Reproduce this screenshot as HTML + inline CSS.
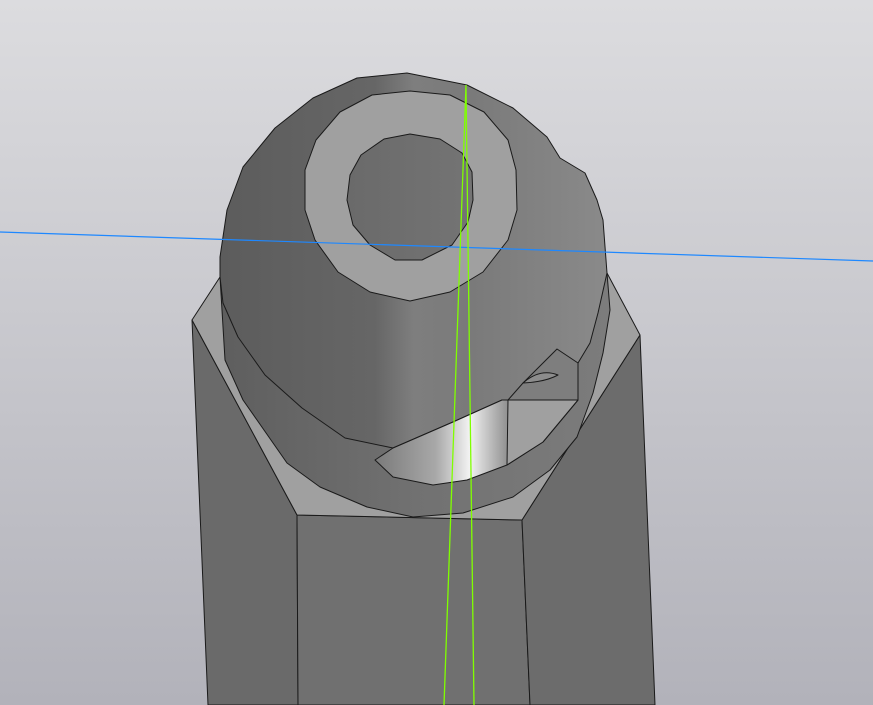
<!DOCTYPE html>
<html><head><meta charset="utf-8"><style>html,body{margin:0;padding:0;width:873px;height:705px;overflow:hidden}svg{display:block}</style></head><body>
<svg width="873" height="705" viewBox="0 0 873 705" xmlns="http://www.w3.org/2000/svg">
<defs>
<linearGradient id="bg" x1="0" y1="0" x2="0" y2="1"><stop offset="0" stop-color="#dcdcdf"/><stop offset="1" stop-color="#b2b2ba"/></linearGradient>
<linearGradient id="dome" x1="0" y1="0" x2="1" y2="0"><stop offset="0" stop-color="#5c5c5c"/><stop offset="0.4" stop-color="#666"/><stop offset="0.5" stop-color="#7e7e7e"/><stop offset="0.65" stop-color="#7a7a7a"/><stop offset="1" stop-color="#8a8a8a"/></linearGradient>
<linearGradient id="skirt" x1="0" y1="0" x2="1" y2="0"><stop offset="0" stop-color="#5e5e5e"/><stop offset="0.5" stop-color="#717171"/><stop offset="1" stop-color="#7c7c7c"/></linearGradient>
<linearGradient id="hole" x1="0" y1="0" x2="1" y2="0"><stop offset="0" stop-color="#6a6a6a"/><stop offset="1" stop-color="#747474"/></linearGradient>
<linearGradient id="slot" x1="375" y1="0" x2="510" y2="0" gradientUnits="userSpaceOnUse"><stop offset="0" stop-color="#7a7a7a"/><stop offset="0.45" stop-color="#a8a8a8"/><stop offset="0.7" stop-color="#f2f2f2"/><stop offset="1" stop-color="#8a8a8a"/></linearGradient>
</defs>
<rect width="873" height="705" fill="url(#bg)"/>
<g stroke="#1a1a1a" stroke-width="1" stroke-linejoin="round">
<polygon points="192,320 297,515 298,705 208,705" fill="#6a6a6a"/>
<polygon points="297,515 522,520 530,705 298,705" fill="#707070"/>
<polygon points="522,520 640,335 655,705 530,705" fill="#6c6c6c"/>
<polygon points="192,320 220,277 607,273 640,335 522,520 297,515" fill="#a0a0a0"/>
<polygon points="220,277 225,360 243,400 257,420 287,463 320,487 367,507 413,517 463,513 513,497 550,470 577,437 593,393 603,353 610,310 607,273" fill="url(#skirt)"/>
<polygon points="220,257 227,210 243,167 275,128 313,98 357,78 407,73 467,85 513,108 547,137 560,158 585,173 597,200 603,220 607,273 598,313 590,343 578,363 578,400 502,400 453,422 393,448 345,438 302,408 265,375 238,337 223,303 220,277" fill="url(#dome)"/>
<polygon points="375,460 393,448 453,422 502,400 578,400 543,442 507,465 467,480 433,485 393,477" fill="url(#slot)"/>
<polygon points="508,400 578,400 543,442 507,465" fill="#a0a0a0"/>
<polygon points="557,349 578,363 578,400 508,400 523,383" fill="#7e7e7e"/>
<path d="M523,383 Q540,368 558,375 Q545,382 523,383 Z" fill="#8c8c8c"/>
<polygon points="410,91 450,95 484,112 508,140 516,170 517,210 508,240 483,272 450,292 410,301 370,292 338,272 315,240 305,210 305,170 316,140 340,112 372,95" fill="#a0a0a0"/>
<polygon points="410,134 440,139 462,153 472,172 473,200 468,222 452,245 422,260 395,260 370,245 353,225 347,200 350,175 361,155 384,139" fill="url(#hole)"/>
</g>
<line x1="0" y1="232" x2="873" y2="261" stroke="#1e88ff" stroke-width="1.2"/>
<line x1="466" y1="85" x2="444" y2="705" stroke="#80ff00" stroke-width="1.3"/>
<line x1="466" y1="88" x2="474" y2="705" stroke="#80ff00" stroke-width="1.3"/>
</svg>
</body></html>
